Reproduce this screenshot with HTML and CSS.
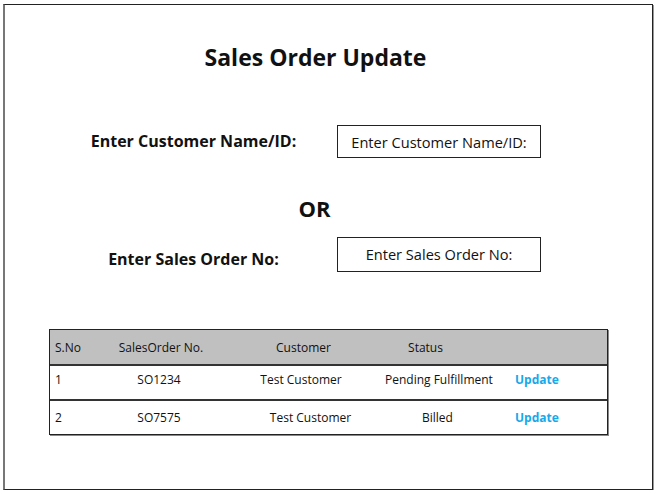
FILE: index.html
```html
<!DOCTYPE html>
<html>
<head>
<meta charset="utf-8">
<link rel="stylesheet" href="styles.css">
</head>
<body>
<div class="frame">
  <h1 class="title">Sales Order Update</h1>
  <div class="form-row row-customer">
    <label class="label">Enter Customer Name/ID:</label>
    <div class="input">Enter Customer Name/ID:</div>
  </div>
  <div class="or">OR</div>
  <div class="form-row row-order">
    <label class="label label-order">Enter Sales Order No:</label>
    <div class="input input-order">Enter Sales Order No:</div>
  </div>
  <div class="table">
    <div class="tr th">
      <div class="c1">S.No</div>
      <div class="c2">SalesOrder No.</div>
      <div class="c3 shift-cust">Customer</div>
      <div class="c4 shift-status">Status</div>
      <div class="c5"></div>
    </div>
    <div class="tr tr-first">
      <div class="c1">1</div>
      <div class="c2 shift-so">SO1234</div>
      <div class="c3">Test Customer</div>
      <div class="c4 shift-pending">Pending Fulfillment</div>
      <div class="c5"><a class="link">Update</a></div>
    </div>
    <div class="tr">
      <div class="c1">2</div>
      <div class="c2 shift-so">SO7575</div>
      <div class="c3 shift-r">Test Customer</div>
      <div class="c4">Billed</div>
      <div class="c5"><a class="link">Update</a></div>
    </div>
  </div>
</div>
</body>
</html>
```
FILE: styles.css
```css
* { box-sizing: border-box; }
body {
  margin: 0;
  background: #fff;
  font-family: "Open Sans", "Noto Sans", sans-serif;
  color: #111;
}
.frame {
  margin: 4px 0 0 3px;
  width: 650px;
  height: 486px;
  border: 1px solid #222;
  border-left: 2px solid #777;
  box-shadow: 1px 1px 0 #999;
  display: flex;
  flex-direction: column;
}
.title {
  margin: 38px 26px 0 0;
  font-size: 23px;
  font-weight: 700;
  text-align: center;
  line-height: 28px;
}
.form-row {
  display: grid;
  grid-template-columns: 287px 204px;
  column-gap: 0;
  align-items: center;
  padding-left: 45px;
}
.row-customer { margin-top: 54px; }
.row-order { margin-top: 16px; }
.label {
  font-size: 16px;
  font-weight: 700;
  text-align: center;
  padding-bottom: 2px;
}
.label-order { padding-top: 8px; padding-bottom: 0; }
.input {
  height: 33px;
  border: 1px solid #222;
  font-size: 14.6px;
  display: flex;
  align-items: center;
  justify-content: center;
}
.input-order {
  height: 35px;
  padding-bottom: 2px;
}
.or {
  margin-top: 37px;
  font-size: 22px;
  font-weight: 700;
  line-height: 26px;
  text-align: center;
  padding-right: 28px;
}
.table {
  margin: 57px 0 0 44px;
  width: 559px;
  border: 1px solid #222;
  box-shadow: 1px 1px 0 #888;
  font-size: 12px;
}
.tr {
  display: grid;
  grid-template-columns: 51px 120px 160px 122px 1fr;
  align-items: center;
  height: 35px;
  border-top: 2px solid #333;
}
.tr:first-child { border-top: none; }
.th {
  background: #c0c0c0;
  height: 34px;
}
.tr-first { padding-bottom: 7px; }
.tr > div { text-align: center; white-space: nowrap; }
.tr > .c1 { text-align: left; padding-left: 5px; }
.tr > .c4 { padding-right: 9px; }
.tr > .c5 { text-align: left; padding-left: 12px; }
.tr > .shift-cust { padding-left: 5px; }
.tr > .shift-status { padding-right: 33px; }
.tr > .shift-pending { text-align: left; padding: 0 0 0 4px; }
.tr > .shift-so { padding-right: 4px; }
.tr > .shift-r { padding-left: 19px; }
.link {
  color: #17a9ea;
  font-weight: 700;
  text-decoration: none;
}
```
